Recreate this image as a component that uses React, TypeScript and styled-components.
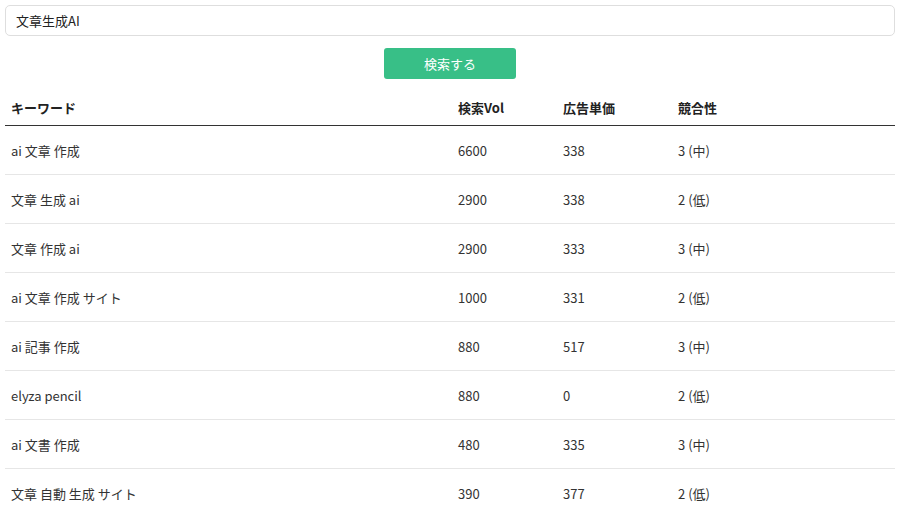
import React from "react";
import styled, { createGlobalStyle } from "styled-components";

const Global = createGlobalStyle`
  body {
    margin: 0;
    background: #fff;
    font-family: "Noto Sans CJK JP", "Noto Sans", sans-serif;
    color: #222;
  }
`;

const Page = styled.div`
  padding: 5px;
  display: flex;
  flex-direction: column;
`;

const SearchInput = styled.input`
  height: 31px;
  box-sizing: border-box;
  border: 1px solid #dedede;
  border-radius: 5px;
  padding: 0 10px;
  font-family: inherit;
  font-size: 13px;
  color: #222;
  outline: none;
`;

const Button = styled.button`
  align-self: center;
  margin-top: 12px;
  width: 132px;
  height: 31px;
  border: none;
  border-radius: 3px;
  background: #38bf87;
  color: #fff;
  font-family: inherit;
  font-size: 13px;
`;

const Table = styled.table`
  margin-top: 11px;
  width: 100%;
  border-collapse: collapse;
  table-layout: fixed;
  font-size: 13px;
`;

const Th = styled.th<{ $w?: number }>`
  width: ${(p) => (p.$w ? `${p.$w}px` : "auto")};
  text-align: left;
  font-weight: 700;
  padding: 0 6px;
  height: 35px;
  border-bottom: 1.5px solid #333;
`;

const Td = styled.td`
  padding: 0 6px;
  height: 48px;
  border-bottom: 1px solid #e6e6e6;
  color: #333;
`;

const rows = [
  ["ai 文章 作成", "6600", "338", "3 (中)"],
  ["文章 生成 ai", "2900", "338", "2 (低)"],
  ["文章 作成 ai", "2900", "333", "3 (中)"],
  ["ai 文章 作成 サイト", "1000", "331", "2 (低)"],
  ["ai 記事 作成", "880", "517", "3 (中)"],
  ["elyza pencil", "880", "0", "2 (低)"],
  ["ai 文書 作成", "480", "335", "3 (中)"],
  ["文章 自動 生成 サイト", "390", "377", "2 (低)"],
];

export default function App() {
  return (
    <Page>
      <Global />
      <SearchInput defaultValue="文章生成AI" />
      <Button>検索する</Button>
      <Table>
        <thead>
          <tr>
            <Th $w={435}>キーワード</Th>
            <Th $w={93}>検索Vol</Th>
            <Th $w={103}>広告単価</Th>
            <Th>競合性</Th>
          </tr>
        </thead>
        <tbody>
          {rows.map((r, i) => (
            <tr key={i}>
              {r.map((c, j) => (
                <Td key={j}>{c}</Td>
              ))}
            </tr>
          ))}
        </tbody>
      </Table>
    </Page>
  );
}
